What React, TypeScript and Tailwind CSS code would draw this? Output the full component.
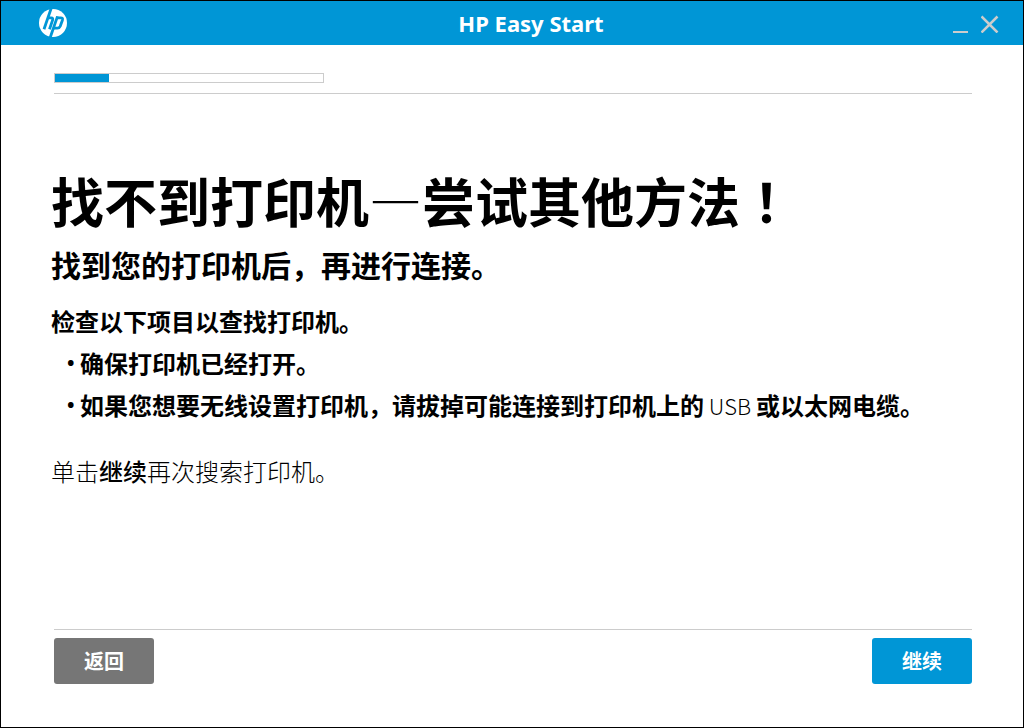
function HpLogo() {
  return (
    <svg className="size-7" viewBox="0 0 28 28" role="img" aria-label="HP">
      <circle cx="14" cy="14" r="14" fill="#fff" />
      <g fill="none" stroke="#0096d6" strokeWidth="2.8">
        <path d="M12.1 -.5 L5 20.3" />
        <path d="M8.3 8.8 H12.2 Q14.4 8.8 13.6 11.1 L10.5 20.3" />
        <path d="M18.5 7.4 L11.2 28.5" />
        <path d="M17 8.8 H21.7 Q24.2 8.8 23.4 11.2 L21.2 17.3 Q20.5 19.1 18.4 19.1 H14.6" />
      </g>
    </svg>
  );
}

export default function App() {
  return (
    <div className="flex min-h-screen flex-col border border-black bg-white font-['Noto_Sans_CJK_SC',sans-serif] text-black">
      <header className="grid h-11 shrink-0 grid-cols-[1fr_auto_1fr] items-center bg-[#0096d6] pl-[38px]">
        <HpLogo />
        <div className="font-['Noto_Sans',sans-serif] text-[22px] leading-7 font-bold text-white">HP Easy Start</div>
        <div className="flex justify-end gap-3 pr-6 text-[#ccc]">
          <button type="button" aria-label="最小化" className="flex">
            <svg className="h-5 w-4" viewBox="0 0 16 20" aria-hidden="true">
              <path d="M0 19H15" stroke="currentColor" strokeWidth="2" />
            </svg>
          </button>
          <button type="button" aria-label="关闭" className="flex">
            <svg className="h-5 w-[18px]" viewBox="0 0 18 20" aria-hidden="true">
              <path d="M.5 3.5L16.5 19.5M16.5 3.5L.5 19.5" stroke="currentColor" strokeWidth="2.5" />
            </svg>
          </button>
        </div>
      </header>

      <div className="mr-[51px] ml-[53px] border-b border-[#ccc] pt-7 pb-[10px]">
        <div role="progressbar" aria-label="进度" aria-valuenow={20} aria-valuemin={0} aria-valuemax={100} className="h-[10px] w-[270px] border border-[#ccc]">
          <div className="h-full w-1/5 bg-[#0096d6]" />
        </div>
      </div>

      <main className="flex-1 pt-[66px] pr-12 pl-[50px] font-bold">
        <h1 className="text-[53px] leading-[80px]">
          找不到打印机<span lang="ja" className="font-['Noto_Sans_CJK_JP',sans-serif] font-normal">—</span>尝试其他方法
          <span className="font-['Noto_Sans_CJK_TC',sans-serif]">！</span>
        </h1>
        <h2 className="pt-[2px] text-[30px] leading-[44px]">找到您的打印机后，再进行连接。</h2>
        <div className="pt-[14px] text-2xl leading-[42px]">
          <p>检查以下项目以查找打印机。</p>
          <ul className="pl-4">
            <li className="flex">
              <span className="w-[13px] font-['Noto_Sans',sans-serif] text-xl leading-[42px]" aria-hidden="true">•</span>
              <span>确保打印机已经打开。</span>
            </li>
            <li className="flex">
              <span className="w-[13px] font-['Noto_Sans',sans-serif] text-xl leading-[42px]" aria-hidden="true">•</span>
              <span>
                如果您想要无线设置打印机，请拔掉可能连接到打印机上的<span className="text-[22px] font-light"> USB </span>或以太网电缆。
              </span>
            </li>
          </ul>
          <p className="pt-6 font-light">
            单击<span className="font-medium">继续</span>再次搜索打印机。
          </p>
        </div>
      </main>

      <footer className="mr-[51px] mb-[43px] ml-[53px] flex justify-between border-t border-[#ccc] pt-2 text-xl font-bold text-white">
        <button type="button" className="h-[46px] w-[100px] rounded-[3px] bg-[#767676]">返回</button>
        <button type="button" className="h-[46px] w-[100px] rounded-[3px] bg-[#0096d6]">继续</button>
      </footer>
    </div>
  );
}
